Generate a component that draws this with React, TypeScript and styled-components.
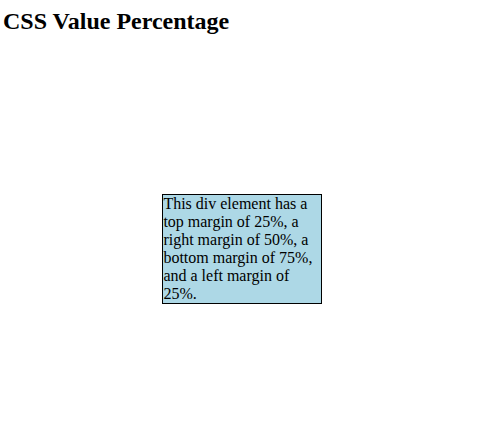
import React from "react";
import styled, { createGlobalStyle } from "styled-components";

const GlobalStyle = createGlobalStyle`
  body {
    margin: 0;
    background: #ffffff;
    color: #000000;
    font-family: "Liberation Serif", "Times New Roman", serif;
    font-size: 16px;
  }
`;

const Page = styled.main`
  display: flow-root;
  padding: 8px 3px 0;
`;

const Title = styled.h2`
  margin: 0;
  font-size: 24px;
  line-height: 27px;
  font-weight: bold;
`;

const Example = styled.div`
  box-sizing: border-box;
  width: 33%;
  margin-top: 33%;
  margin-left: 33%;
  border: 1px solid #000000;
  background: lightblue;
  line-height: 18px;
`;

export default function App() {
  return (
    <>
      <GlobalStyle />
      <Page>
        <Title>CSS Value Percentage</Title>
        <Example>
          This div element has a top margin of 25%, a right margin of 50%, a
          bottom margin of 75%, and a left margin of 25%.
        </Example>
      </Page>
    </>
  );
}
